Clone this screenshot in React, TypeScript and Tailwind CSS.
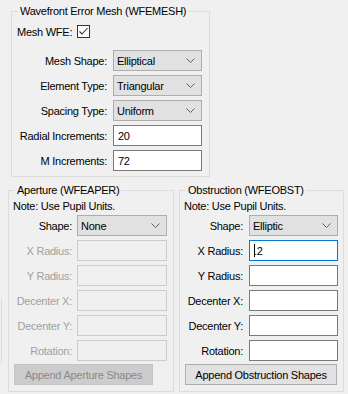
import React from 'react';

const Chevron: React.FC<{ muted?: boolean }> = ({ muted }) => (
  <svg width="9" height="6" viewBox="0 0 9 6" className="shrink-0">
    <polyline points="0.5,0.5 4.5,4.5 8.5,0.5" fill="none" stroke={muted ? '#9a9a9a' : '#606060'} strokeWidth="1" />
  </svg>
);

const Combo: React.FC<{ value: string }> = ({ value }) => (
  <div className="h-[21px] border border-[#adadad] bg-[#e1e1e1] flex items-center justify-between pl-[3px] pr-[6px]">
    <span>{value}</span>
    <Chevron />
  </div>
);

const TextBox: React.FC<{ value?: string; disabled?: boolean; focused?: boolean; caret?: boolean }> = ({ value, disabled, focused, caret }) => (
  <div
    className={
      'h-[21px] border flex items-center pl-[4px] ' +
      (disabled ? 'border-[#cccccc] bg-[#f0f0f0]' : focused ? 'border-[#0078d7] bg-white' : 'border-[#7a7a7a] bg-white')
    }
  >
    {caret && <span className="inline-block w-px h-[13px] bg-black -mr-px" />}
    <span>{value}</span>
  </div>
);

const Label: React.FC<{ text: string; disabled?: boolean }> = ({ text, disabled }) => (
  <div className={'flex items-center justify-end whitespace-nowrap h-[21px] ' + (disabled ? 'text-[#a0a0a0]' : 'text-black')}>
    {text}
  </div>
);

const Legend: React.FC<{ title: string }> = ({ title }) => (
  <legend className="ml-[6px] px-[2px] leading-[16px] whitespace-nowrap">{title}</legend>
);

export default function App() {
  return (
    <div className="relative w-[348px] h-[394px] overflow-hidden bg-[#f0f0f0] text-black text-[11px] tracking-[-0.25px] font-['Liberation_Sans',Arial,sans-serif] leading-[14px]">
      {/* faint border of a panel clipped off at the left */}
      <div className="absolute left-[1px] top-[298px] h-[65px] w-px bg-[#dcdcdc]" />

      <fieldset className="ml-[11px] mt-[3px] w-[199px] h-[174px] border border-[#dcdcdc]">
        <Legend title="Wavefront Error Mesh (WFEMESH)" />
        <div className="pl-[5px]">
          <div className="flex items-center h-[13px] mt-[6px]">
            <span className="w-[60px] whitespace-nowrap">Mesh WFE:</span>
            <div className="w-[13px] h-[13px] border border-[#333333] bg-white flex items-center justify-center">
              <svg width="11" height="11" viewBox="0 0 11 11">
                <polyline points="1.5,5.5 4,8 9.5,2" fill="none" stroke="#333333" strokeWidth="1.1" />
              </svg>
            </div>
          </div>
          <div className="grid grid-cols-[90px_89px] gap-x-[6px] gap-y-[4px] mt-[12px]">
            <Label text="Mesh Shape:" />
            <Combo value="Elliptical" />
            <Label text="Element Type:" />
            <Combo value="Triangular" />
            <Label text="Spacing Type:" />
            <Combo value="Uniform" />
            <Label text="Radial Increments:" />
            <TextBox value="20" />
            <Label text="M Increments:" />
            <TextBox value="72" />
          </div>
        </div>
      </fieldset>

      <div className="flex gap-[5px] ml-[8px] mt-[5px]">
        <fieldset className="w-[166px] h-[210px] border border-[#dcdcdc]">
          <Legend title="Aperture (WFEAPER)" />
          <div className="pl-[4px]">
            <div className="mt-[1px] whitespace-nowrap">Note: Use Pupil Units.</div>
            <div className="grid grid-cols-[59px_90px] gap-x-[5px] gap-y-[4px] mt-[2px]">
              <Label text="Shape:" />
              <Combo value="None" />
              <Label text="X Radius:" disabled />
              <TextBox disabled />
              <Label text="Y Radius:" disabled />
              <TextBox disabled />
              <Label text="Decenter X:" disabled />
              <TextBox disabled />
              <Label text="Decenter Y:" disabled />
              <TextBox disabled />
              <Label text="Rotation:" disabled />
              <TextBox disabled />
            </div>
            <button className="ml-[1px] mt-[3px] w-[139px] h-[21px] bg-[#cccccc] border border-[#c4c4c4] text-[#8a8a8a] flex items-center justify-center whitespace-nowrap">
              Append Aperture Shapes
            </button>
          </div>
        </fieldset>

        <fieldset className="w-[165px] h-[210px] border border-[#dcdcdc]">
          <Legend title="Obstruction (WFEOBST)" />
          <div className="pl-[4px]">
            <div className="mt-[1px] whitespace-nowrap">Note: Use Pupil Units.</div>
            <div className="grid grid-cols-[59px_89px] gap-x-[6px] gap-y-[4px] mt-[2px]">
              <Label text="Shape:" />
              <Combo value="Elliptic" />
              <Label text="X Radius:" />
              <TextBox value=".2" focused caret />
              <Label text="Y Radius:" />
              <TextBox />
              <Label text="Decenter X:" />
              <TextBox />
              <Label text="Decenter Y:" />
              <TextBox />
              <Label text="Rotation:" />
              <TextBox />
            </div>
            <button className="ml-[1px] mt-[3px] w-[152px] h-[21px] bg-[#e1e1e1] border border-[#adadad] text-black flex items-center justify-center whitespace-nowrap">
              Append Obstruction Shapes
            </button>
          </div>
        </fieldset>
      </div>
    </div>
  );
}
